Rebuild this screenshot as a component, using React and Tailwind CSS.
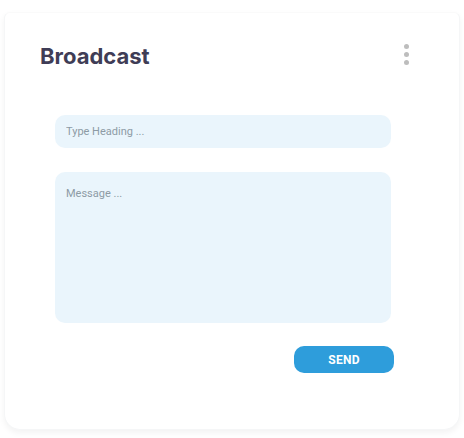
export default function App() {
  return (
    <div className="w-[464px] h-[438px] bg-white pt-[12px] px-[4px]" style={{ fontFamily: 'Roboto, "Liberation Sans", sans-serif' }}>
      <div className="w-[456px] h-[418px] bg-white rounded-b-[16px] rounded-t-[6px] border border-[#f5f6f7] border-t-[#fafafa] shadow-[0_3px_6px_rgba(0,0,0,0.05)]">
        {/* Header */}
        <div className="flex items-center justify-between pl-[35px] pr-[50px] pt-[28px]">
          <h1 className="text-[22px] font-bold text-[#3f3d56] leading-[30px]" style={{ fontFamily: 'Inter, Roboto, sans-serif' }}>
            Broadcast
          </h1>
          <div className="flex flex-col gap-[3px] -mt-[4px]">
            <span className="w-[5px] h-[5px] rounded-full bg-[#bdbdbd]" />
            <span className="w-[5px] h-[5px] rounded-full bg-[#bdbdbd]" />
            <span className="w-[5px] h-[5px] rounded-full bg-[#bdbdbd]" />
          </div>
        </div>

        {/* Form */}
        <div className="ml-[50px] w-[339px] mt-[44px] flex flex-col">
          <input
            className="w-[336px] h-[33px] rounded-[10px] bg-[#eaf5fc] px-[11px] text-[11px] text-[#5b6a75] placeholder-[#8d9ba5] outline-none"
            placeholder="Type Heading ..."
          />
          <textarea
            className="mt-[24px] w-[336px] h-[151px] rounded-[10px] bg-[#eaf5fc] px-[11px] py-[14px] text-[11px] text-[#5b6a75] placeholder-[#8d9ba5] outline-none resize-none"
            placeholder="Message ..."
          />
          <button className="self-end mt-[23px] w-[100px] h-[27px] rounded-[10px] bg-[#2e9ddb] text-white text-[12px] font-bold tracking-[0.3px]">
            SEND
          </button>
        </div>
      </div>
    </div>
  )
}
